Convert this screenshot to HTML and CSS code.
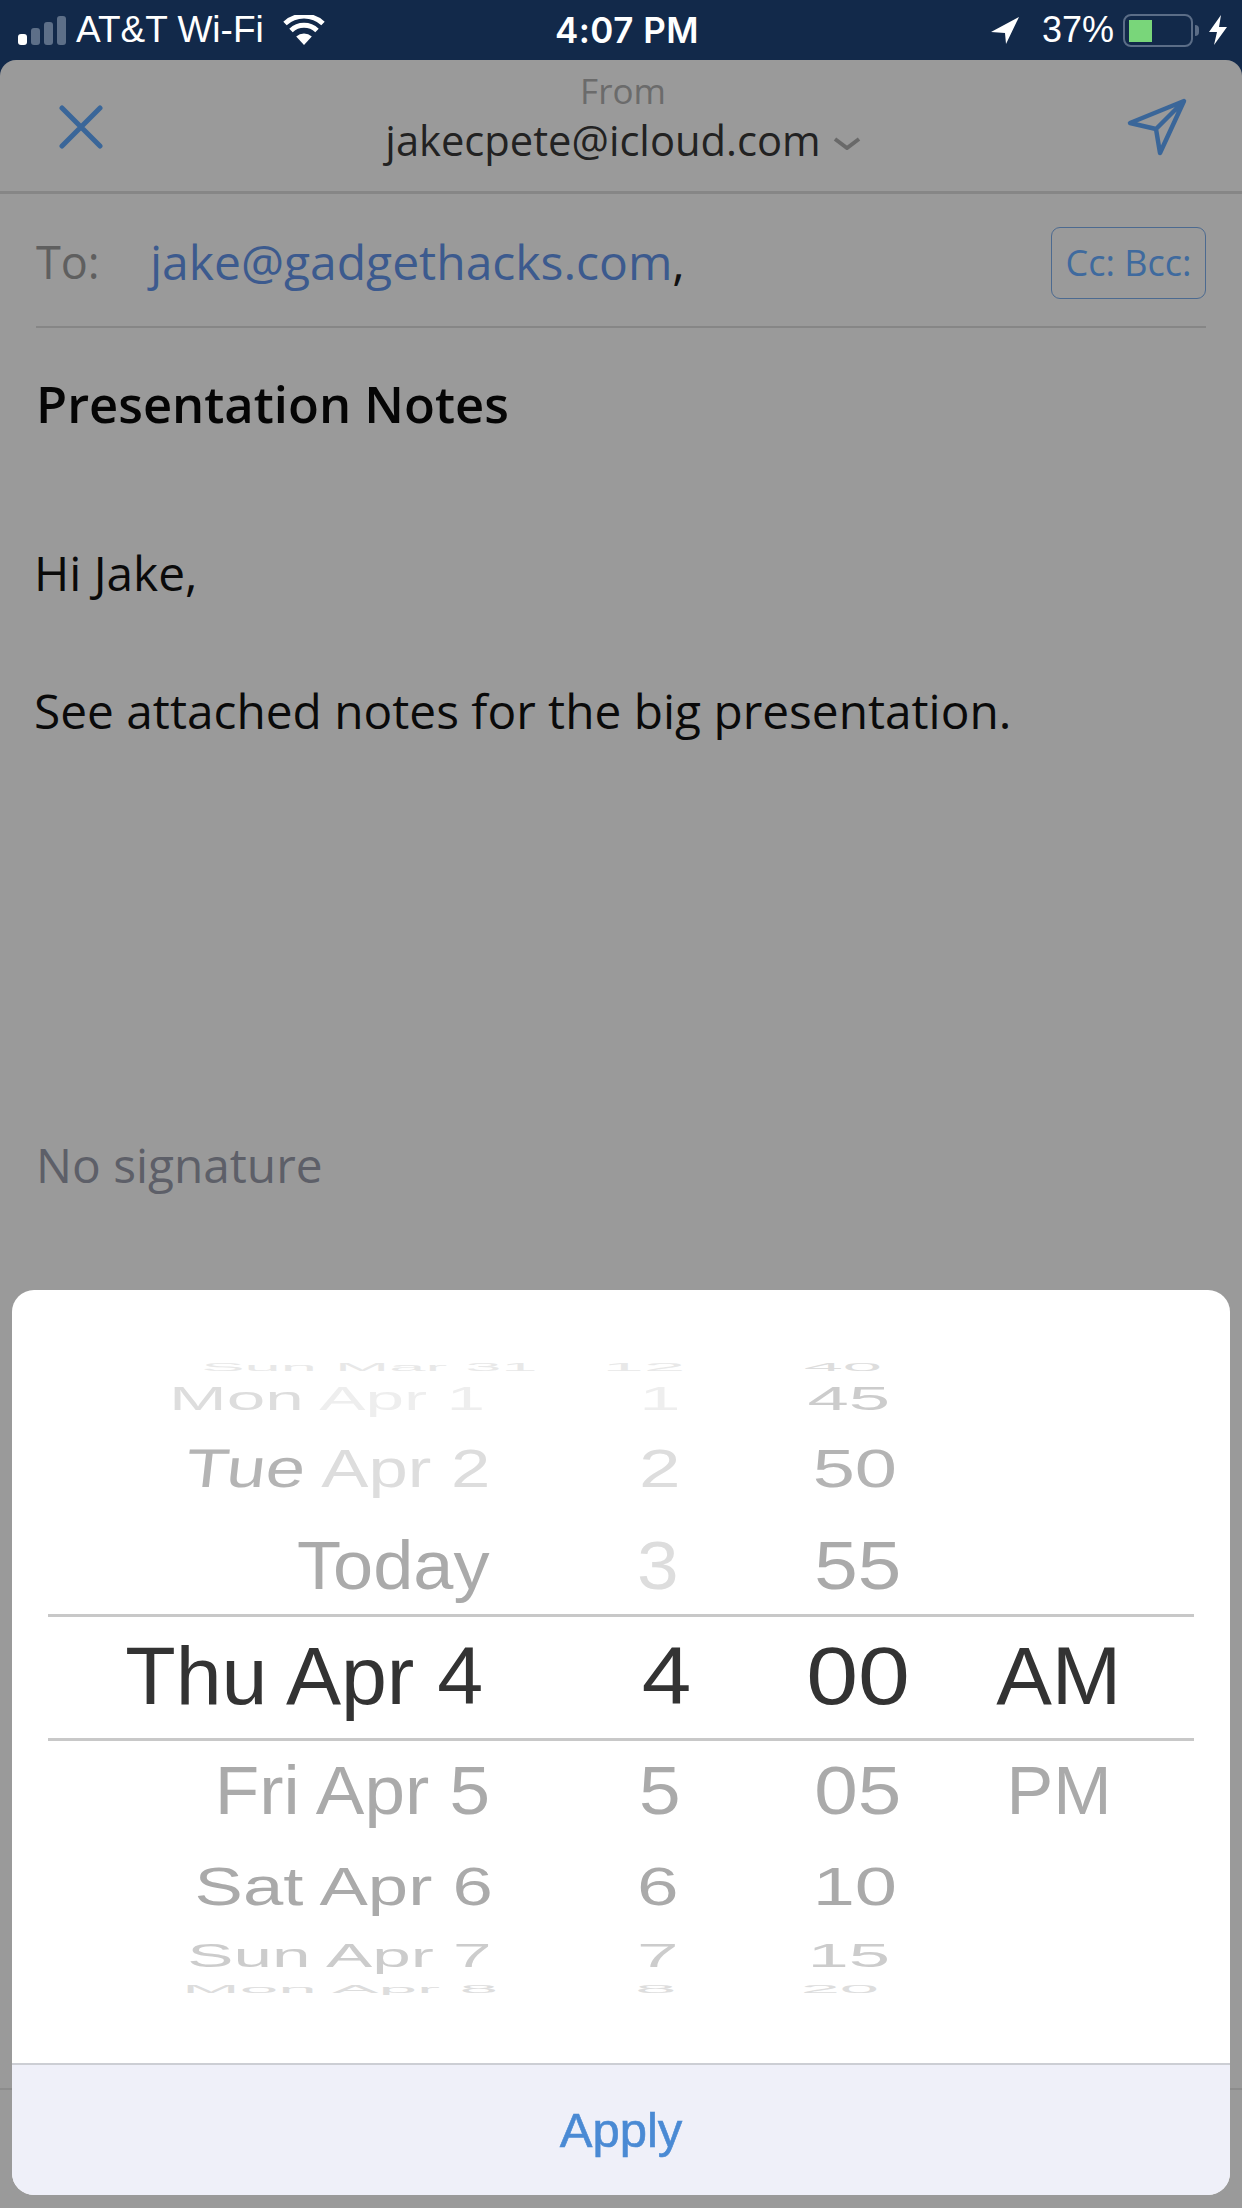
FILE: index.html
```html
<!DOCTYPE html>
<html lang="en">
<head>
  <meta charset="UTF-8" />
  <title>Compose - Send Later</title>
  <link rel="stylesheet" href="styles.css">
</head>
<body>

  <div class="status-bar">
    <div class="status-left">
      <svg class="signal" width="48" height="29" viewBox="0 0 48 29">
        <rect class="bar-on" x="0" y="18" width="9" height="11" rx="3" />
        <rect class="bar-off" x="13" y="12" width="9" height="17" rx="3" />
        <rect class="bar-off" x="26" y="6" width="9" height="23" rx="3" />
        <rect class="bar-off" x="39" y="0" width="9" height="29" rx="3" />
      </svg>
      <span class="carrier">AT&amp;T Wi-Fi</span>
      <svg class="wifi" width="42" height="30" viewBox="0 0 42 30">
        <path d="M21 30 L13.2 21.6 A11.5 11.5 0 0 1 28.8 21.6 Z" fill="#fff" />
        <path d="M8 15.5 A19 19 0 0 1 34 15.5" fill="none" stroke="#fff" stroke-width="5" />
        <path d="M2 8.5 A28 28 0 0 1 40 8.5" fill="none" stroke="#fff" stroke-width="5" />
      </svg>
    </div>
    <div class="status-time">4:07 PM</div>
    <div class="status-right">
      <svg class="arrow" width="28" height="27" viewBox="0 0 28 27">
        <path d="M28 0 L0 15 L14 16 L15 27 Z" fill="#fff" />
      </svg>
      <span class="percent">37%</span>
      <div class="battery"><div class="battery-fill"></div></div>
      <div class="battery-nub"></div>
      <svg class="bolt" width="18" height="30" viewBox="0 0 18 30">
        <path d="M12 0 L0 17 L8 17 L5 30 L18 12 L10 12 Z" fill="#fff" />
      </svg>
    </div>
  </div>

  <div class="sheet">
    <div class="compose-header">
      <svg class="close-icon" width="44" height="44" viewBox="0 0 44 44">
        <path d="M3 3 L41 41 M41 3 L3 41" fill="none" stroke="#3a6699" stroke-width="5" stroke-linecap="round" />
      </svg>
      <div class="from">
        <div class="from-label">From</div>
        <div class="from-value">
          <span>jakecpete@icloud.com</span>
          <svg class="chevron" width="28" height="13" viewBox="0 0 28 13">
            <path d="M2 2 L14 11 L26 2" fill="none" stroke="#696969" stroke-width="4" />
          </svg>
        </div>
      </div>
      <svg class="send-icon" width="60" height="58" viewBox="0 0 60 58">
        <path d="M57 3 L3 25 L29 31 L33 55 Z M57 3 L29 31" fill="none" stroke="#3a6699" stroke-width="4.5" stroke-linejoin="round" />
      </svg>
    </div>

    <div class="to-row">
      <span class="to-label">To:</span>
      <span class="to-value"><a class="recipient">jake@gadgethacks.com</a>,</span>
      <button class="cc-button">Cc: Bcc:</button>
    </div>

    <h2 class="subject">Presentation Notes</h2>
    <p class="body-line first">Hi Jake,</p>
    <p class="body-line">See attached notes for the big presentation.</p>
    <p class="signature">No signature</p>

    <div class="sheet-footer"></div>
  </div>

  <div class="modal">
    <div class="wheel">
      <div class="col col-date">
        <div class="cell r-4 t-e x-sunmar"><span>Sun Mar 31</span></div>
        <div class="cell r-3 t-f x-monapr"><span><i class="t-d">Mon</i> Apr 1</span></div>
        <div class="cell r-2 t-d"><span><i class="slant t-b">Tue</i> Apr 2</span></div>
        <div class="cell r-1 t-a x-today"><span>Today</span></div>
        <div class="cell r0 t-dark x-sel"><span>Thu Apr 4</span></div>
        <div class="cell r1 t-a x-wide"><span>Fri Apr 5</span></div>
        <div class="cell r2 t-a x-sat"><span>Sat Apr 6</span></div>
        <div class="cell r3 t-c x-narrow"><span>Sun Apr 7</span></div>
        <div class="cell r4 t-d x-monlow"><span>Mon Apr 8</span></div>
      </div>
      <div class="col col-hour">
        <div class="cell r-4 t-e x-hour12"><span>12</span></div>
        <div class="cell r-3 t-f"><span>1</span></div>
        <div class="cell r-2 t-d"><span>2</span></div>
        <div class="cell r-1 t-d x-h3"><span>3</span></div>
        <div class="cell r0 t-dark x-hour4"><span>4</span></div>
        <div class="cell r1 t-a"><span>5</span></div>
        <div class="cell r2 t-a x-h3"><span>6</span></div>
        <div class="cell r3 t-c x-h3"><span>7</span></div>
        <div class="cell r4 t-d x-h8"><span>8</span></div>
      </div>
      <div class="col col-min">
        <div class="cell r-4 t-d x-m40"><span>40</span></div>
        <div class="cell r-3 t-c x-m45"><span>45</span></div>
        <div class="cell r-2 t-b x-m50"><span>50</span></div>
        <div class="cell r-1 t-a"><span>55</span></div>
        <div class="cell r0 t-dark"><span>00</span></div>
        <div class="cell r1 t-a"><span>05</span></div>
        <div class="cell r2 t-a x-m50"><span>10</span></div>
        <div class="cell r3 t-c x-m45"><span>15</span></div>
        <div class="cell r4 t-d x-m20"><span>20</span></div>
      </div>
      <div class="col col-ampm">
        <div class="cell r-4"></div>
        <div class="cell r-3"></div>
        <div class="cell r-2"></div>
        <div class="cell r-1"></div>
        <div class="cell r0 t-dark"><span>AM</span></div>
        <div class="cell r1 t-a"><span>PM</span></div>
      </div>
    </div>
    <div class="band"></div>
    <button class="apply">Apply</button>
  </div>

</body>
</html>
```

FILE: styles.css
```css
html, body {
  margin: 0;
  padding: 0;
}

body {
  position: relative;
  width: 1242px;
  height: 2208px;
  overflow: hidden;
  background: #12294a;
  font-family: "Open Sans", sans-serif;
}

/* status bar */
.status-bar {
  height: 60px;
  display: flex;
  align-items: center;
  justify-content: space-between;
  padding: 0 15px 0 18px;
  color: #fff;
  font-family: "Liberation Sans", Arial, sans-serif;
  font-size: 36px;
}

.status-left,
.status-right {
  width: 400px;
  display: flex;
  align-items: center;
}

.status-right {
  justify-content: flex-end;
}

.signal {
  margin-top: 1px;
}

.bar-on {
  fill: #fff;
}

.bar-off {
  fill: #5d6f88;
}

.carrier {
  margin-left: 10px;
  font-size: 37px;
}

.wifi {
  margin-left: 19px;
}

.status-time {
  margin-left: 9px;
  font-family: Inter, sans-serif;
  font-weight: 600;
  font-size: 35px;
  letter-spacing: 0.5px;
}

.percent {
  margin-left: 23px;
}

.battery {
  width: 70px;
  height: 33px;
  margin-left: 9px;
  padding: 4px 0 0 4px;
  box-sizing: border-box;
  border: 2.5px solid #5b6d87;
  border-radius: 8px;
}

.battery-fill {
  width: 23px;
  height: 22px;
  background: #79d67a;
}

.battery-nub {
  width: 4px;
  height: 11px;
  margin-left: 2px;
  background: #5b6d87;
  border-radius: 0 4px 4px 0;
}

.bolt {
  margin-left: 10px;
}

/* compose sheet */
.sheet {
  height: 2148px;
  display: flex;
  flex-direction: column;
  background: #9a9a9a;
  border-radius: 16px 16px 0 0;
}

.compose-header {
  height: 131px;
  display: flex;
  align-items: flex-start;
  justify-content: space-between;
  padding: 0 55px 0 59px;
  border-bottom: 3px solid #868686;
}

.close-icon {
  margin-top: 45px;
}

.send-icon {
  margin-top: 38px;
}

.from {
  padding-left: 16px;
  text-align: center;
}

.from-label {
  margin-top: 9px;
  font-size: 35px;
  line-height: 44px;
  color: #6b6b6b;
}

.from-value {
  display: flex;
  align-items: center;
  margin-top: 2px;
  font-size: 41.7px;
  line-height: 50px;
  color: #222;
}

.chevron {
  margin: 6px 0 0 12px;
}

.to-row {
  height: 134px;
  margin: 0 36px;
  padding-top: 2px;
  display: flex;
  align-items: center;
  border-bottom: 2px solid #868686;
  box-sizing: border-box;
}

.to-label {
  width: 114px;
  font-size: 45px;
  color: #5f5f5f;
}

.to-value {
  flex: 1;
  font-size: 48px;
  color: #111;
}

.recipient {
  color: #3c5a8e;
}

.cc-button {
  width: 155px;
  height: 72px;
  margin-top: 3px;
  padding: 0;
  background: none;
  border: 1.5px solid #4c6a90;
  border-radius: 9px;
  font-family: "Open Sans", sans-serif;
  font-size: 36px;
  color: #3f6a9e;
}

.subject {
  margin: 46px 0 0 36px;
  font-size: 50.7px;
  font-weight: 600;
  line-height: 60px;
  color: #050505;
}

.body-line {
  margin: 78px 0 0 34px;
  font-size: 47.8px;
  line-height: 60px;
  color: #0a0a0a;
}

.body-line.first {
  margin-top: 109px;
}

.signature {
  margin: 394px 0 0 36px;
  font-size: 47.8px;
  line-height: 60px;
  color: #5d5f68;
}

.sheet-footer {
  margin-top: auto;
  height: 120px;
  border-top: 2px solid #8c8c8c;
  box-sizing: border-box;
}

/* date picker modal, sits over the sheet */
.modal {
  position: absolute;
  left: 12px;
  top: 1290px;
  width: 1218px;
  height: 905px;
  display: flex;
  flex-direction: column;
  background: #fff;
  border-radius: 22px;
  overflow: hidden;
  font-family: "Liberation Sans", Arial, sans-serif;
}

.wheel {
  height: 640px;
  margin-top: 70px;
  display: flex;
  overflow: hidden;
  font-size: 68px;
  line-height: 1;
}

/* the picker's digits run wider than Liberation's, so each column has its own stretch */
.col {
  flex: none;
}

.col-date {
  --fx: 1.04;
  width: 478px;
}

.col-hour {
  --fx: 1.1;
  width: 120px;
  margin-left: 110px;
}

.col-min {
  --fx: 1.15;
  width: 120px;
  margin-left: 78px;
}

.col-ampm {
  --fx: 1.03;
  width: 160px;
  margin-left: 61px;
}

.cell {
  --tx: 0px;
  --sx: 1;
  --sy: 1;
  --dy: 0px;
  display: flex;
  align-items: center;
  justify-content: center;
  white-space: pre;
}

.col-date .cell {
  justify-content: flex-end;
}

.cell span {
  display: inline-block;
  transform: translate(var(--tx), var(--dy)) scale(calc(var(--sx) * var(--fx)), var(--sy));
  transform-origin: center;
}

.col-date .cell span {
  transform-origin: right center;
}

.cell i {
  font-style: normal;
}

.slant {
  display: inline-block;
  transform: skewX(-5deg);
}

/* wheel rows, squashed more the further they are from the middle */
.r-4 { height: 13px; --sy: 0.16; }
.r-3 { height: 55px; --sy: 0.5; --dy: -3px; }
.r-2 { height: 84px; --sy: 0.8; --dy: -2px; }
.r-1 { height: 104px; --dy: 1px; }
.r0 { height: 123px; font-size: 81px; --dy: -1px; }
.r1 { height: 102px; }
.r2 { height: 93px; --sy: 0.8; --dy: -2px; }
.r3 { height: 44px; --sy: 0.49; --dy: -1px; }
.r4 { height: 22px; --sy: 0.17; }

/* text tones */
.t-dark { color: #333; }
.t-a { color: #aaa; }
.t-b { color: #b4b4b4; }
.t-c { color: #ccc; }
.t-d { color: #ddd; }
.t-e { color: #e8e8e8; }
.t-f { color: #eee; }

/* horizontal nudges per item */
.x-sunmar { --tx: 48px; --sx: 0.92; }
.x-monapr { --tx: -5px; --sx: 0.98; }
.x-today { --tx: -1px; --sx: 1.02; }
.x-sel { --tx: -7px; --sx: 0.98; }
.x-wide { --sx: 1.03; }
.x-sat { --tx: 3px; --sx: 1.025; }
.x-narrow { --tx: 2px; --sx: 0.98; }
.x-monlow { --tx: 8px; --sx: 0.98; }
.x-hour12 { --tx: -16px; }
.x-hour4 { --tx: 7px; }
.x-h3 { --tx: -2px; }
.x-h8 { --tx: -4px; }
.x-m40 { --tx: -15px; --sx: 0.9; }
.x-m45 { --tx: -9px; --sx: 0.95; }
.x-m50 { --tx: -3px; --sx: 0.97; }
.x-m20 { --tx: -18px; --sx: 0.9; }

.band {
  position: absolute;
  left: 36px;
  right: 36px;
  top: 324px;
  height: 127px;
  box-sizing: border-box;
  border-top: 3px solid #c8c8c8;
  border-bottom: 3px solid #c8c8c8;
}

.apply {
  height: 132px;
  margin-top: auto;
  padding: 0;
  background: #eff0f9;
  border: none;
  border-top: 2px solid #ccced4;
  font-family: "Liberation Sans", Arial, sans-serif;
  font-size: 49px;
  -webkit-text-stroke: 0.6px #4a8ad4;
  color: #4a8ad4;
}
```
